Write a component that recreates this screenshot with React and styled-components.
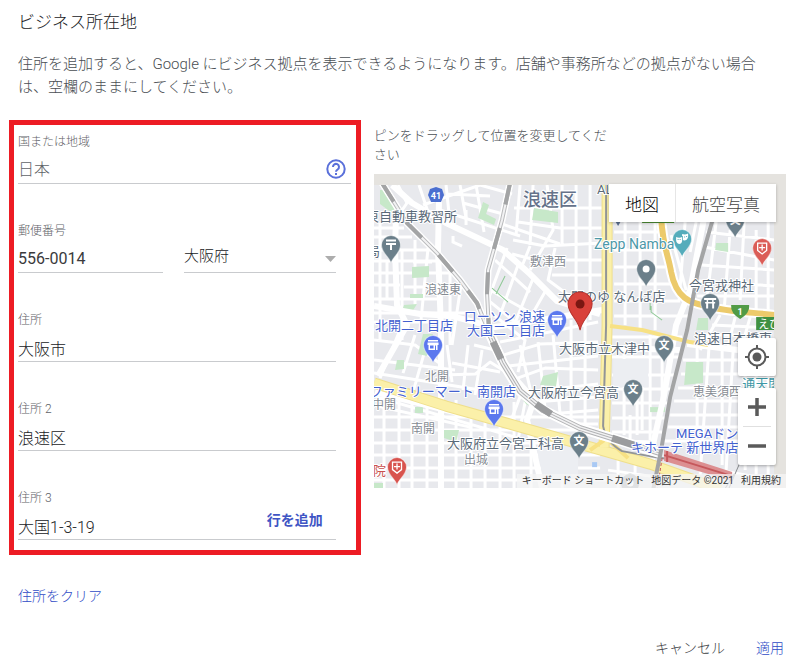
import React from "react";
import styled, { createGlobalStyle } from "styled-components";

const GlobalStyle = createGlobalStyle`
  * { box-sizing: border-box; }
  body {
    margin: 0;
    background: #fff;
    color: #202124;
    font-family: Roboto, "Noto Sans CJK JP", sans-serif;
  }
  button, input, select { font-family: inherit; }
`;

const Page = styled.main`
  padding: 10px 14px 6px 9px;
`;

const Title = styled.h1`
  margin: 0 9px 19px;
  font-size: 17px;
  line-height: 24px;
  font-weight: 300;
  color: #202124;
`;

const Lead = styled.p`
  margin: 0 28px 0 9px;
  font-size: 15px;
  line-height: 23px;
  font-weight: 300;
  color: #4a4e53;
`;

const Columns = styled.div`
  display: grid;
  grid-template-columns: minmax(0, 35fr) minmax(0, 41fr);
  column-gap: 13px;
  align-items: start;
  margin-top: 21px;
`;

const AddressBox = styled.form`
  display: flex;
  flex-direction: column;
  gap: 38px;
  padding: 8px 5px 10px 4px;
  border: 5px solid #ed1c24;
`;

const Field = styled.div`
  display: flex;
  flex-direction: column;
  flex: 1;
  min-width: 0;
  margin-right: ${(p) => (p.$inset ? "15px" : "0")};
`;

const Label = styled.label`
  font-size: 12px;
  line-height: 18px;
  font-weight: 300;
  color: #5f6368;
`;

const Control = styled.div`
  display: flex;
  align-items: center;
  height: 33px;
  border-bottom: 1px solid #c9cbce;
`;

const TextInput = styled.input`
  flex: 1;
  min-width: 0;
  height: 30px;
  padding: ${(p) => (p.$muted ? "2px" : "5px")} 0 0;
  border: 0;
  outline: 0;
  background: transparent;
  font-size: 16px;
  font-weight: ${(p) => (p.$numeric ? 400 : 300)};
  color: ${(p) => (p.$muted ? "#5f6368" : p.$numeric ? "#3a3a3c" : "#202124")};
`;

const HelpButton = styled.button`
  display: flex;
  margin-right: 5px;
  padding: 4px 0 0;
  border: 0;
  background: none;
  cursor: pointer;
`;

const AddLineButton = styled.button`
  margin-right: 13px;
  padding: 0 0 6px;
  border: 0;
  background: none;
  font-size: 14px;
  line-height: 18px;
  font-weight: 700;
  color: #3f55c4;
  cursor: pointer;
`;

const FieldRow = styled.div`
  display: grid;
  grid-template-columns: 145fr 152fr;
  column-gap: 21px;
  margin-right: 15px;
  align-items: end;
`;

const SelectWrap = styled.div`
  display: grid;
  grid-template-columns: minmax(0, 1fr) 11px;
  align-items: center;
  height: 33px;
  border-bottom: 1px solid #c9cbce;
  svg { grid-area: 1 / 2; margin-top: 6px; pointer-events: none; }
`;

const Select = styled.select`
  grid-area: 1 / 1 / 2 / 3;
  height: 28px;
  padding: 0;
  border: 0;
  outline: 0;
  appearance: none;
  background: transparent;
  font-size: 15px;
  font-weight: 300;
  color: #202124;
`;

const MapColumn = styled.section`
  padding-top: 6px;
`;

const Hint = styled.p`
  max-width: 245px;
  margin: 0 0 10px;
  font-size: 13px;
  line-height: 19px;
  font-weight: 300;
  color: #4a4e53;
`;

const MapFrame = styled.div`
  position: relative;
  overflow: hidden;
  background: #e5e3df;
`;

const MapDrawing = styled.svg`
  display: block;
  width: 100%;
  height: auto;
`;

const MapTypes = styled.div`
  position: absolute;
  top: 10px;
  right: 10px;
  display: flex;
  background: #fff;
  box-shadow: 0 1px 3px rgba(0, 0, 0, 0.25);
`;

const MapTypeButton = styled.button`
  height: 38px;
  padding: 0 16px;
  border: 0;
  border-left: ${(p) => (p.$active ? "0" : "1px solid #e6e6e6")};
  background: none;
  font-size: 17px;
  font-weight: 300;
  color: ${(p) => (p.$active ? "#000" : "#444")};
  cursor: pointer;
`;

const MapTools = styled.div`
  position: absolute;
  right: 10px;
  bottom: 23px;
  display: flex;
  flex-direction: column;
  gap: 12px;
`;

const ToolGroup = styled.div`
  display: flex;
  flex-direction: column;
  align-items: center;
  width: 38px;
  border-radius: 2px;
  background: #fff;
  box-shadow: 0 1px 3px rgba(0, 0, 0, 0.3);
`;

const ToolButton = styled.button`
  display: flex;
  align-items: center;
  justify-content: center;
  width: 38px;
  height: 38px;
  padding: 0;
  border: 0;
  background: none;
  cursor: pointer;
`;

const ToolRule = styled.span`
  width: 28px;
  height: 1px;
  background: #e0e0e0;
`;

const Attribution = styled.div`
  position: absolute;
  right: 0;
  bottom: 0;
  display: flex;
  gap: 7px;
  padding: 0 5px;
  background: rgba(245, 245, 245, 0.75);
  font-size: 10px;
  line-height: 14px;
  color: #333;
  white-space: nowrap;
`;

const AttributionButton = styled.button`
  padding: 0;
  border: 0;
  background: none;
  font-size: 10px;
  line-height: 14px;
  color: inherit;
`;

const AttributionLink = styled.a`
  color: inherit;
  text-decoration: none;
`;

const TextButton = styled.button`
  padding: 0;
  border: 0;
  background: none;
  font-size: 14px;
  line-height: 20px;
  font-weight: 300;
  color: ${(p) => (p.$primary ? "#2f4bc6" : "#3c4043")};
  cursor: pointer;
`;

const ClearRow = styled.div`
  margin: 31px 9px 32px;
`;

const Footer = styled.footer`
  display: flex;
  justify-content: flex-end;
  gap: 31px;
  padding-right: 2px;
`;

const PIN = "M0 18C-1.500 12-9.500 8-9.500 0A9.500 9.500 0 0 1 9.500 0C9.500 8 1.500 12 0 18Z";

const GLYPHS = {
  post: <path d="M-5-4.500H5M-5-1H5M0-1V5" stroke="#fff" strokeWidth="2" fill="none" />,
  shop: <path d="M-5-5H5V-3.500H-5ZM-5.500-2.500H5.500V0H4.500V5H-4.500V0H-5.500ZM-3 .5V3.500H.5V.5ZM2 .5V5H3V.5Z" fill="#fff" fillRule="evenodd" />,
  medical: (
    <g fill="none" stroke="#fff" strokeWidth="1.300">
      <path d="M-4.500-5H4.500V2.500L0 6-4.500 2.500Z" />
      <path d="M0-3.500V2.500M-3-.5H3" />
    </g>
  ),
  shrine: <path d="M-6-5H6V-3H-6ZM-5-1H5V.5H4V5.500H2V.5H-2V5.500H-4V.5H-5ZM-3.500-3H-2V-1H-3.500ZM2-3H3.500V-1H2Z" fill="#fff" />,
  dot: <circle r="3.500" fill="#fff" />,
  masks: (
    <g fill="#fff">
      <path d="M-6-2Q-3-.5 0-2V2Q-.5 5-3 5-6 4-6 1Z" />
      <path d="M0-5Q3-4 6-5.500V-2Q5 1.500 2 1.500L.8 1V-2.800L0-3Z" />
      <path d="M-4.500.5h1M-2.500.5h1M2-2h1M4-2.500h1" stroke="#5aaebc" />
    </g>
  ),
};

const PINS = [
  [391, 245, "#6b7f8a", "post"],
  [735, 220, "#6b7f8a", "school"],
  [646, 269, "#6b7f8a", "dot"],
  [710, 303, "#6b7f8a", "shrine"],
  [682, 239, "#55acbb", "masks"],
  [762, 248, "#db5d57", "medical"],
  [557, 320, "#5b78ee", "shop"],
  [433, 345, "#5b78ee", "shop"],
  [494, 409, "#5b78ee", "shop"],
  [664, 345, "#6b7f8a", "school"],
  [633, 389, "#6b7f8a", "school"],
  [579, 441, "#6b7f8a", "school"],
  [397, 467, "#d8534e", "medical"],
  [630, 483, "#9aa5ab", "dot"],
];

const GREY = "#5b6a78";
const AREA = "#858b93";
const BLUE = "#4361cf";

/* x, baseline, text, colour, size, anchor */
const LABELS = [
  [457, 221, "東自動車教習所", GREY, 13, "end"],
  [380, 256, "局", GREY, 13, "end"],
  [530, 266, "敷津西", AREA, 12],
  [425, 294, "浪速東", AREA, 12],
  [558, 301, "太閤のゆ なんば店", GREY, 13],
  [375, 330, "北開二丁目店", BLUE, 13],
  [545, 321, "ローソン 浪速", BLUE, 13, "end"],
  [545, 335, "大国二丁目店", BLUE, 13, "end"],
  [425, 381, "北開", AREA, 12],
  [516, 396, "ファミリーマート 南開店", BLUE, 13, "end"],
  [396, 409, "中開", AREA, 12, "end"],
  [411, 433, "南開", AREA, 12],
  [447, 448, "大阪府立今宮工科高", GREY, 13],
  [464, 464, "出城", AREA, 12],
  [386, 475, "院", "#c9504d", 13, "end"],
  [559, 353, "大阪市立木津中", GREY, 13],
  [528, 397, "大阪府立今宮高", GREY, 13],
  [594, 249, "Zepp Namba", "#4c98a8", 14],
  [689, 290, "今宮戎神社", GREY, 13],
  [694, 343, "浪速日本橋東", GREY, 13],
  [693, 396, "恵美須西", AREA, 12],
  [742, 388, "通天閣", "#3d97a5", 13],
  [738, 438, "MEGAドン", BLUE, 13, "end"],
  [738, 452, "キホーテ 新世界店", BLUE, 13, "end"],
  [597, 194, "AL", GREY, 13],
];

const MINOR_ROADS = [
  "M374 228H404M374 237H412M374 250H437M374 261H447M374 273H455M374 285H400M374 299H437M374 313H470M374 322H440",
  "M380 223V340M387 262V300M402 250V340M415 240V305M428 248L420 330M450 262V345M462 278L452 345M413 262H432M404 287H438",
  "M398 185L407 203 400 213M419 185L430 218M446 185L450 223M460 185L466 218M476 185L484 232M423 205L480 185M440 210L520 236M463 203L503 214M448 194L490 196M480 185L512 194",
  "M520 185L516 235M533 185L530 245M547 185L553 230 530 270M562 185V245M576 185V290M590 185V320M514 208H602M518 222L560 228 602 228M513 240L545 246 602 243M512 254L536 260M545 260H602M552 275H602",
  "M502 224L560 244M495 260L530 292M490 290L540 318M507 248L488 300 525 330M518 265L500 315M534 276L512 330M546 290L530 318M555 248L548 280 575 300M530 246L522 266M490 312L525 340 518 372",
  "M614 196H642M614 213H640M614 232H662M614 250H663M614 267H665M614 284H672M614 301H680M614 316H690M625 222V325M640 222V330M655 222V330M671 235L686 290M685 222L679 300M696 222L690 252",
  "M706 232L774 240M704 247L774 260M701 265L774 270M699 281L774 286M697 296H774M716 222L706 305M730 230L724 310M744 222L740 300M756 230V310M768 222V312M712 325L774 328M698 335H738M720 315L700 350M735 317L727 350M750 317L744 338",
  "M374 340L415 345 442 365M374 360L455 370M374 373L480 390M400 330L380 378M415 335L403 373M425 350L413 392M447 345L452 382M468 345L463 390M482 350L475 395M452 363L500 372M474 345L495 350M442 375L475 374 490 362 519 380",
  "M374 396L525 440M374 405L470 427M374 417H600M374 430H600M374 443H560M374 455H600M374 468H600M374 480H640M384 390V488M399 394V488M412 392V488M427 398V488M456 400V488M471 410V488M485 418V488M500 426V488M514 402V488M531 435V488M546 430V488M562 440V488",
  "M500 342L598 322M503 355L540 344 598 342M508 366L598 356M512 380L545 368 598 370M525 392L598 384M535 402L598 397M550 414L598 410M570 424H598M520 345L532 397M538 342L545 408M553 335L560 414M571 320V420M585 310V425M521 394L510 423M525 402L517 445",
  "M612 337H682M612 357H679M612 375H676M612 389H673M612 403H670M612 418H666M612 432H662M614 441L656 442M624 345V435M637 398V435M650 335V440M662 340V400M630 415V440M642 372V430",
  "M683 360H740M681 374H740M678 388H740M674 401H740M670 415H740M668 427H740M664 441H740M697 345V450M709 345L700 475M722 350V465M733 350L726 470M745 376V470M756 376V488M768 376V488M690 465L774 480M613 453L655 460M608 470L650 476M618 450V488M635 456V488",
];

const MAJOR_ROADS = [
  "M392 185L412 203 446 223 503 250 530 274 557 301 600 314",
  "M396 215L395 250 397 305 407 325 378 376",
  "M439 198L438 250 441 330 441 395 441 488",
  "M374 306L420 314 452 316 490 326",
  "M375 392L446 410 512 425 600 448",
  "M512 375L534 400 527 420 542 488",
  "M488 328L540 320 602 310",
  "M704 218L690 290 676 325 664 395 651 453",
  "M612 348L680 350M687 344L738 350",
];

const PARKS = [
  "M380 190H388L396 207 392 213 380 204Z",
  "M483 202L489 205 486 214 496 219 494 225 478 218Z",
  "M534 208L558 212V223L532 220Z",
  "M412 267L429 266V277L412 278Z",
  "M410 294H423V298H410Z",
  "M404 305L417 304 412 312 402 311Z",
  "M716 243H728V252L715 250Z",
  "M698 318H708V330H696Z",
  "M686 362H703V383L684 385Z",
  "M650 407H665V412H650Z",
  "M423 334H433L427 356 418 354Z",
  "M397 360H404V369L395 370Z",
  "M543 376L558 372 556 386 540 385Z",
  "M443 430H459L456 442 444 438Z",
  "M415 407H423V413H415Z",
  "M520 396L535 407 545 414 526 404Z",
  "M374 483H383V488H374Z",
];

function Pin({ x, y, color, glyph }) {
  return (
    <g transform={`translate(${x} ${y})`}>
      <path d={PIN} fill={color} stroke="#fff" strokeOpacity=".5" />
      {glyph === "school" ? (
        <text y="4" fontSize="11" fontWeight="700" textAnchor="middle" fill="#fff">文</text>
      ) : (
        GLYPHS[glyph]
      )}
    </g>
  );
}

function Rail({ d }) {
  return (
    <g fill="none">
      <path d={d} stroke="#fff" strokeWidth="7" />
      <path d={d} stroke="#b9babc" strokeWidth="4" />
      <path d={d} stroke="#f2f2f3" strokeWidth="2" />
      <path d={d} stroke="#a3a4a5" strokeWidth="4" strokeDasharray="22 24" />
    </g>
  );
}

function CityMap() {
  return (
    <MapDrawing viewBox="374 174 412 314" role="img" aria-label="地図">
      <defs>
        <clipPath id="tiles">
          <path d="M374 185H774V488H374Z" />
        </clipPath>
      </defs>
      <g clipPath="url(#tiles)">
        <path d="M374 185H774V488H374Z" fill="#e8e9ed" />
        <g fill="none" stroke="#fff" strokeWidth="3" strokeLinejoin="round">
          {MINOR_ROADS.map((d) => <path key={d} d={d} />)}
        </g>
        <path d="M442 229L496 252 487 322 472 296 442 259Z" fill="#e9eaee" />
        <path d="M613 359H648V387H613ZM536 446H578V479H543Z" fill="#eceef2" />
        <path d="M453 236V242L462 246M466 210V225" fill="none" stroke="#fff" strokeWidth="3" />
        <g fill="#c7e8c9">
          {PARKS.map((d) => <path key={d} d={d} />)}
        </g>
        <path d="M492 288L508 302M505 276L496 294M651 306V312L662 320M650 303V310" stroke="#8ec995" fill="none" />
        <g fill="none" stroke="#fff" strokeWidth="6" strokeLinejoin="round">
          {MAJOR_ROADS.map((d) => <path key={d} d={d} />)}
        </g>
        <g fill="none" strokeLinejoin="round">
          <path d="M374 383L446 406 510 424 580 444 650 464 692 479 720 490" stroke="#efdf8c" strokeWidth="11" />
          <path d="M374 383L446 406 510 424 580 444 650 464 692 479 720 490" stroke="#fbf0a9" strokeWidth="9" />
          <path d="M607 185V325L604 447" stroke="#efdf8c" strokeWidth="11" />
          <path d="M607 185V325L604 447" stroke="#fbf0a9" strokeWidth="9" />
          <path d="M610 326L642 330 690 342 708 345M604 440L590 450M606 438L628 458" stroke="#f7e184" strokeWidth="4" />
          <path d="M606 185V325L603 426Q606 442 622 451L655 457 700 464" stroke="#929597" strokeWidth="2" />
          <path d="M661 218C663 248 668 254 671 272C676 298 690 303 706 306C728 312 750 312 776 315" stroke="#fff" strokeWidth="10" />
          <path d="M661 218C663 248 668 254 671 272C676 298 690 303 706 306C728 312 750 312 776 315" stroke="#ecca6b" strokeWidth="6" />
        </g>
        <Rail d="M382 183L407 223 437 253 460 280 477 303 488 330" />
        <Rail d="M510 183L502 220 488 270 487 293 489 332" />
        <g fill="none" strokeLinejoin="round">
          <path d="M488 330L503 363 520 391 543 410 580 428 660 453" stroke="#fff" strokeWidth="10" />
          <path d="M488 330L503 363 520 391 543 410 580 428 660 453" stroke="#b0b1b3" strokeWidth="6" />
          <path d="M488 330L503 363 520 391 543 410 580 428 660 453" stroke="#f2f2f3" strokeWidth="4" />
          <path d="M488 330L503 363 520 391 543 410 580 428 660 453" stroke="#b0b1b3" strokeWidth="1" />
          <path d="M493 342L501 359M536 404L551 414M612 438L640 447" stroke="#9b9c9e" strokeWidth="7" />
        </g>
        <path d="M713 218L698 270 687 330 670 397 661 450 653 490" fill="none" stroke="#a3a4a5" strokeWidth="4" />
        <path d="M664 450L732 472V481L664 461Z" fill="#dc8f91" />
        <path d="M667 451V462M664 455L732 476" stroke="#c6585c" strokeWidth="2" />
        <path d="M662 458L657 490" stroke="#c6585c" strokeDasharray="3 2" />
        <path d="M734 474L724 490M740 462L728 490" stroke="#8b8e92" fill="none" />
        <path d="M642 218H674V223H642Z" fill="#4e8f35" />
        <path d="M756 317H774V330H756Z" fill="#3f9142" />
        <text x="758" y="328" fontSize="11" fill="#fff">えび</text>
        <path d="M592 462H597V467H592Z" fill="#a9c9f4" />
        <path d="M614 219H622L618 226Z" fill="#5b6f91" />
        <path d="M430 189L436 187 442 189 444 195 441 202H431L428 195Z" fill="#4b6fd0" />
        <text x="436" y="199" fontSize="9" fontWeight="700" textAnchor="middle" fill="#fff">41</text>
        <path d="M731 305H749Q750 313 740 319Q730 313 731 305Z" fill="#519b46" />
        <text x="740" y="315" fontSize="9" fontWeight="700" textAnchor="middle" fill="#fff">1</text>
        {PINS.map(([x, y, color, glyph]) => (
          <Pin key={`${x}-${y}`} x={x} y={y} color={color} glyph={glyph} />
        ))}
        <g stroke="#fff" strokeWidth="2" strokeLinejoin="round" paintOrder="stroke">
          <text x="523" y="206" fontSize="18" fontWeight="500" fill="#65728a">浪速区</text>
          {LABELS.map(([x, y, text, fill, size, anchor]) => (
            <text key={text} x={x} y={y} fill={fill} fontSize={size} textAnchor={anchor || "start"}>
              {text}
            </text>
          ))}
        </g>
        <g transform="translate(580 304)">
          <path d="M0 26C-2 15-12 10-12 0A12 12 0 0 1 12 0C12 10 2 15 0 26Z" fill="#d9413a" stroke="#b7322c" />
          <circle r="4.500" fill="#7a1712" />
        </g>
      </g>
    </MapDrawing>
  );
}

function HelpIcon() {
  return (
    <svg width="20" height="20" viewBox="0 0 20 20" fill="none" stroke="#5a70da" strokeWidth="2" aria-hidden="true">
      <circle cx="10" cy="10" r="8.700" />
      <path d="M7 8A3 3 0 1 1 11.800 10.300C10.500 11 10 11.500 10 12.800M10 14V16" />
    </svg>
  );
}

function LocateIcon() {
  return (
    <svg width="26" height="26" viewBox="0 0 26 26" fill="none" stroke="#5a5a5a" strokeWidth="2" aria-hidden="true">
      <circle cx="13" cy="13" r="8.500" />
      <circle cx="13" cy="13" r="4.500" fill="#5a5a5a" stroke="none" />
      <path d="M13 1V5M13 21V25M1 13H5M21 13H25" />
    </svg>
  );
}

function ZoomIcon({ plus }) {
  return (
    <svg width="18" height="18" viewBox="0 0 18 18" stroke="#5a5a5a" strokeWidth="3.500" aria-hidden="true">
      <path d={plus ? "M0 9H18M9 0V18" : "M0 9H18"} />
    </svg>
  );
}

function AddressField({ id, label, value, inset, muted, children }) {
  return (
    <Field $inset={inset}>
      <Label htmlFor={id}>{label}</Label>
      <Control>
        <TextInput id={id} defaultValue={value} $muted={muted} $numeric={/^\d/.test(value)} readOnly={muted} />
        {children}
      </Control>
    </Field>
  );
}

export default function App() {
  return (
    <>
      <GlobalStyle />
      <Page>
        <Title>ビジネス所在地</Title>
        <Lead>
          住所を追加すると、Google にビジネス拠点を表示できるようになります。店舗や事務所などの拠点がない場合は、空欄のままにしてください。
        </Lead>
        <Columns>
          <AddressBox onSubmit={(e) => e.preventDefault()}>
            <AddressField id="country" label="国または地域" value="日本" muted>
              <HelpButton type="button" aria-label="ヘルプ">
                <HelpIcon />
              </HelpButton>
            </AddressField>
            <FieldRow>
              <AddressField id="postal" label="郵便番号" value="556-0014" />
              <SelectWrap>
                <Select aria-label="都道府県" defaultValue="大阪府">
                  <option>大阪府</option>
                  <option>京都府</option>
                  <option>兵庫県</option>
                </Select>
                <svg width="11" height="6" viewBox="0 0 11 6" aria-hidden="true">
                  <path d="M0 0H11L5.500 6Z" fill="#adadad" />
                </svg>
              </SelectWrap>
            </FieldRow>
            <AddressField id="address1" label="住所" value="大阪市" inset />
            <AddressField id="address2" label="住所 2" value="浪速区" inset />
            <AddressField id="address3" label="住所 3" value="大国1-3-19" inset>
              <AddLineButton type="button">行を追加</AddLineButton>
            </AddressField>
          </AddressBox>
          <MapColumn>
            <Hint>ピンをドラッグして位置を変更してください</Hint>
            <MapFrame>
              <CityMap />
              <MapTypes>
                <MapTypeButton type="button" $active>地図</MapTypeButton>
                <MapTypeButton type="button">航空写真</MapTypeButton>
              </MapTypes>
              <MapTools>
                <ToolGroup>
                  <ToolButton type="button" aria-label="現在地">
                    <LocateIcon />
                  </ToolButton>
                </ToolGroup>
                <ToolGroup>
                  <ToolButton type="button" aria-label="拡大">
                    <ZoomIcon plus />
                  </ToolButton>
                  <ToolRule />
                  <ToolButton type="button" aria-label="縮小">
                    <ZoomIcon />
                  </ToolButton>
                </ToolGroup>
              </MapTools>
              <Attribution>
                <AttributionButton type="button">キーボード ショートカット</AttributionButton>
                <span>地図データ ©2021</span>
                <AttributionLink href="#terms">利用規約</AttributionLink>
              </Attribution>
            </MapFrame>
          </MapColumn>
        </Columns>
        <ClearRow>
          <TextButton type="button" $primary>住所をクリア</TextButton>
        </ClearRow>
        <Footer>
          <TextButton type="button">キャンセル</TextButton>
          <TextButton type="button" $primary>適用</TextButton>
        </Footer>
      </Page>
    </>
  );
}
